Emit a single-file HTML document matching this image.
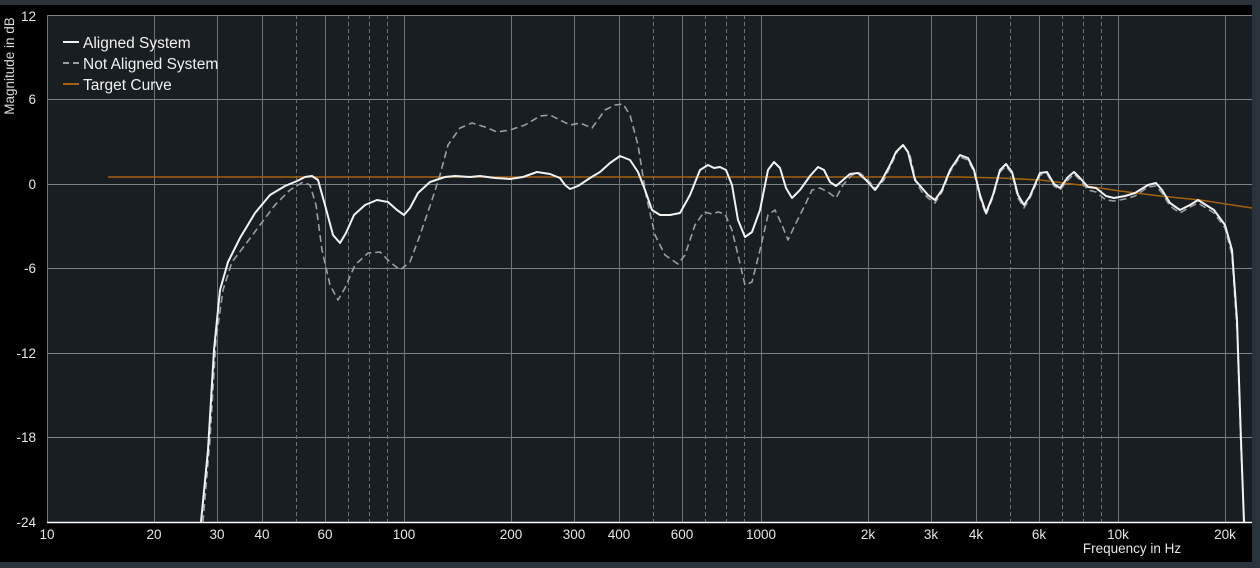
<!DOCTYPE html>
<html><head><meta charset="utf-8"><style>
html,body{margin:0;padding:0;background:#2b333a;}
svg{display:block;font-family:"Liberation Sans",sans-serif;}
</style></head><body>
<svg width="1260" height="568" viewBox="0 0 1260 568">
<rect x="0" y="0" width="1260" height="568" fill="#2b333a"/>
<rect x="0" y="5" width="1252" height="557" fill="#000"/>
<rect x="47" y="15" width="1205" height="507" fill="#181e22"/>
<g stroke="#7b8186" stroke-width="1">
<line x1="47" y1="15.5" x2="1252" y2="15.5"/>
<line x1="47" y1="99.5" x2="1252" y2="99.5"/>
<line x1="47" y1="184.5" x2="1252" y2="184.5"/>
<line x1="47" y1="268.5" x2="1252" y2="268.5"/>
<line x1="47" y1="353.5" x2="1252" y2="353.5"/>
<line x1="47" y1="437.5" x2="1252" y2="437.5"/>
</g>
<g stroke="#6d7378" stroke-width="1">
<line x1="47.5" y1="15" x2="47.5" y2="522"/>
<line x1="154.5" y1="15" x2="154.5" y2="522"/>
<line x1="217.5" y1="15" x2="217.5" y2="522"/>
<line x1="262.5" y1="15" x2="262.5" y2="522"/>
<line x1="325.5" y1="15" x2="325.5" y2="522"/>
<line x1="404.5" y1="15" x2="404.5" y2="522"/>
<line x1="511.5" y1="15" x2="511.5" y2="522"/>
<line x1="574.5" y1="15" x2="574.5" y2="522"/>
<line x1="619.5" y1="15" x2="619.5" y2="522"/>
<line x1="682.5" y1="15" x2="682.5" y2="522"/>
<line x1="761.5" y1="15" x2="761.5" y2="522"/>
<line x1="868.5" y1="15" x2="868.5" y2="522"/>
<line x1="931.5" y1="15" x2="931.5" y2="522"/>
<line x1="976.5" y1="15" x2="976.5" y2="522"/>
<line x1="1039.5" y1="15" x2="1039.5" y2="522"/>
<line x1="1118.5" y1="15" x2="1118.5" y2="522"/>
<line x1="1225.5" y1="15" x2="1225.5" y2="522"/>
</g>
<g stroke="#6d7378" stroke-width="1" stroke-dasharray="4,3">
<line x1="296.5" y1="15" x2="296.5" y2="522"/>
<line x1="348.5" y1="15" x2="348.5" y2="522"/>
<line x1="369.5" y1="15" x2="369.5" y2="522"/>
<line x1="387.5" y1="15" x2="387.5" y2="522"/>
<line x1="653.5" y1="15" x2="653.5" y2="522"/>
<line x1="705.5" y1="15" x2="705.5" y2="522"/>
<line x1="726.5" y1="15" x2="726.5" y2="522"/>
<line x1="744.5" y1="15" x2="744.5" y2="522"/>
<line x1="1010.5" y1="15" x2="1010.5" y2="522"/>
<line x1="1062.5" y1="15" x2="1062.5" y2="522"/>
<line x1="1083.5" y1="15" x2="1083.5" y2="522"/>
<line x1="1101.5" y1="15" x2="1101.5" y2="522"/>
</g>
<line x1="47" y1="522.5" x2="1252" y2="522.5" stroke="#fff" stroke-width="1.5"/>
<polyline fill="none" stroke="#a8600c" stroke-width="1.6" points="108,177 960,177 1000,178 1040,180 1080,185 1120,191 1160,196 1200,200 1252,208"/>
<polyline fill="none" stroke="#9a9ea2" stroke-width="1.6" stroke-dasharray="7,4" stroke-linejoin="round" points="203,522 210,440 216,340 223,290 232,262 245,245 260,225 275,205 290,190 303,182 310,185 316,205 322,250 330,285 338,300 345,288 355,265 368,253 380,252 390,262 400,270 410,262 420,235 432,200 440,175 448,145 460,128 472,123 485,127 497,132 510,130 525,125 540,116 550,115 560,120 570,125 580,123 592,128 605,110 615,105 623,104 630,115 638,145 646,195 655,235 665,255 678,264 685,255 695,225 704,212 712,214 718,212 725,214 732,230 738,255 745,285 752,282 760,250 768,215 775,210 782,225 788,240 795,225 805,205 812,190 820,188 828,192 836,198 843,185 852,175 860,173 868,180 876,189 884,180 892,163 898,150 904,146 910,155 916,182 922,192 928,198 935,203 942,192 950,172 960,157 968,160 974,172 980,198 986,215 993,197 1000,172 1006,166 1012,174 1018,198 1024,208 1030,198 1040,175 1047,174 1054,186 1060,190 1068,180 1074,174 1080,180 1088,190 1096,192 1106,200 1114,201 1125,199 1135,196 1148,187 1156,186 1162,193 1170,206 1180,213 1190,207 1198,203 1206,208 1214,213 1225,228 1232,255 1237,330 1241,450 1244,522"/>
<polyline fill="none" stroke="#f2f2f2" stroke-width="2" stroke-linejoin="round" points="201,522 208,450 214,350 220,290 228,262 240,238 255,213 270,195 285,186 297,181 305,177 312,176 318,180 325,205 333,235 340,243 346,233 354,215 365,205 377,200 388,202 397,210 404,215 410,208 418,193 430,182 445,177 455,176 470,177 480,176 495,178 510,179 523,177 537,172 550,174 560,178 565,185 570,189 578,186 590,178 600,172 610,163 620,156 630,160 638,172 645,190 652,210 660,215 670,215 680,213 690,195 700,170 708,165 714,168 720,167 726,170 732,185 738,220 745,237 752,232 760,210 768,170 774,162 780,168 786,188 792,198 800,190 810,176 818,167 824,170 830,182 836,186 843,180 850,174 858,173 866,180 875,190 882,180 890,165 896,152 903,145 908,152 915,180 922,188 928,195 935,200 942,190 950,170 960,155 968,158 974,170 980,195 986,213 993,195 1000,170 1006,164 1012,172 1018,195 1024,205 1030,196 1040,173 1047,172 1054,184 1060,188 1068,177 1074,172 1080,178 1088,187 1096,188 1106,196 1114,198 1125,196 1135,193 1148,185 1156,183 1162,190 1170,203 1180,210 1190,205 1198,200 1206,205 1214,210 1225,225 1232,250 1237,320 1241,440 1244,522"/>
<g fill="#e6e6e6" font-size="13.5" text-anchor="end">
<text x="36" y="21">12</text>
<text x="36" y="104">6</text>
<text x="36" y="189">0</text>
<text x="36" y="273">-6</text>
<text x="36" y="358">-12</text>
<text x="36" y="442">-18</text>
<text x="36" y="527">-24</text>
</g>
<text transform="translate(14,66) rotate(-90)" text-anchor="middle" fill="#d8d8d8" font-size="13.5">Magnitude in dB</text>
<g fill="#e6e6e6" font-size="13.5" text-anchor="middle">
<text x="47" y="539">10</text><text x="154" y="539">20</text><text x="217" y="539">30</text><text x="262" y="539">40</text><text x="325" y="539">60</text><text x="404" y="539">100</text><text x="511" y="539">200</text><text x="574" y="539">300</text><text x="619" y="539">400</text><text x="682" y="539">600</text><text x="761" y="539">1000</text><text x="868" y="539">2k</text><text x="931" y="539">3k</text><text x="976" y="539">4k</text><text x="1039" y="539">6k</text><text x="1118" y="539">10k</text><text x="1225" y="539">20k</text>
</g>
<text x="1132" y="553" text-anchor="middle" fill="#e6e6e6" font-size="13.5">Frequency in Hz</text>
<line x1="63" y1="42" x2="79" y2="42" stroke="#f2f2f2" stroke-width="2"/>
<line x1="63" y1="63" x2="79" y2="63" stroke="#9a9ea2" stroke-width="2" stroke-dasharray="6,4"/>
<line x1="63" y1="84" x2="79" y2="84" stroke="#a8600c" stroke-width="2"/>
<g fill="#f0f0f0" font-size="15.5">
<text x="83" y="48">Aligned System</text>
<text x="83" y="69">Not Aligned System</text>
<text x="83" y="90">Target Curve</text>
</g>
</svg>
</body></html>
